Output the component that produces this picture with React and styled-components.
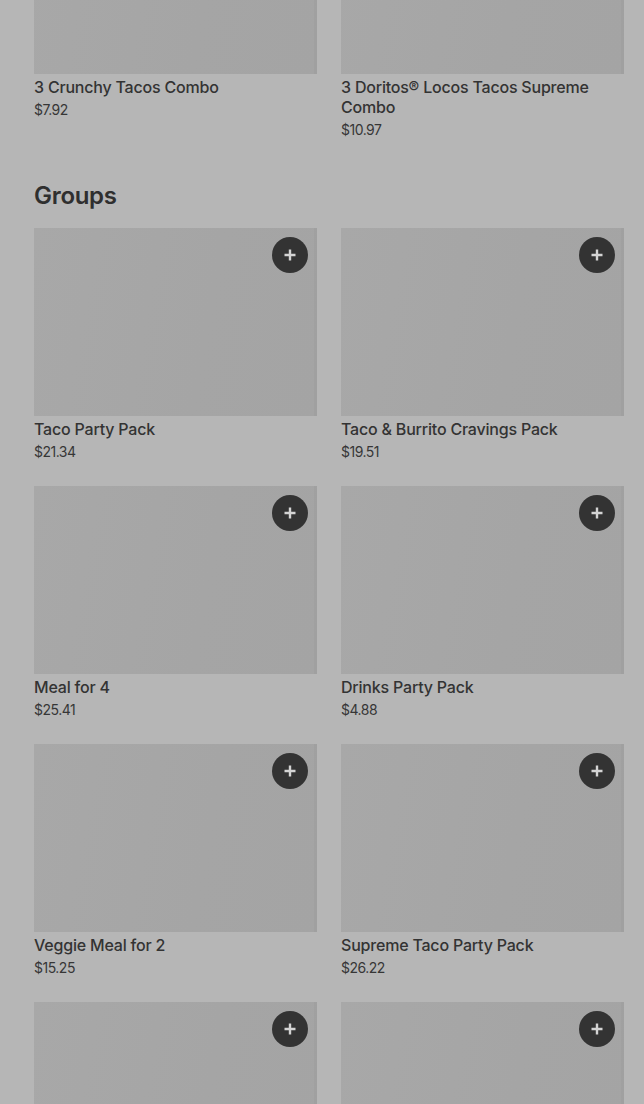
import React from "react";
import styled, { createGlobalStyle } from "styled-components";

const GlobalStyle = createGlobalStyle`
  html, body {
    margin: 0;
    padding: 0;
    background: #b6b6b6;
    overflow: hidden;
    height: 1104px;
  }
  body {
    font-family: Inter, "Noto Sans", Arial, sans-serif;
    color: #2f2f2f;
  }
`;

const Page = styled.main`
  margin-top: -114px;
  padding: 0 20px 0 34px;
  display: flex;
  flex-direction: column;
  height: 1218px;
  overflow: hidden;
`;

const Section = styled.section`
  display: flex;
  flex-direction: column;
`;

const Heading = styled.h2`
  margin: 40px 0 16px;
  font-size: 24px;
  line-height: 32px;
  font-weight: 600;
  letter-spacing: -0.3px;
  color: #2f2f2f;
`;

const Grid = styled.div`
  display: grid;
  grid-template-columns: repeat(2, 283px);
  column-gap: 24px;
  row-gap: 24px;
`;

const Card = styled.div`
  display: flex;
  flex-direction: column;
`;

const Thumb = styled.div`
  position: relative;
  height: 188px;
  background: linear-gradient(100deg, #a8a8a8 0%, #a5a5a5 60%, #a4a4a4 100%);
  box-shadow: inset -3px 0 0 rgba(0, 0, 0, 0.02);
`;

const AddButton = styled.button`
  position: absolute;
  top: 9px;
  right: 9px;
  width: 36px;
  height: 36px;
  border-radius: 50%;
  border: none;
  padding: 0;
  background: #333333;
  display: flex;
  align-items: center;
  justify-content: center;
  cursor: pointer;
`;

const Title = styled.div`
  margin-top: 3px;
  font-size: 16px;
  line-height: 20px;
  font-weight: 500;
  letter-spacing: -0.2px;
  color: #333333;
`;

const Price = styled.div`
  margin-top: 3px;
  font-size: 14px;
  line-height: 20px;
  font-weight: 400;
  letter-spacing: -0.5px;
  color: #363636;
`;

const PlusIcon = () => (
  <svg width="14" height="14" viewBox="0 0 14 14" aria-hidden="true">
    <path d="M7 1.5v11M1.5 7h11" stroke="#d4d4d4" strokeWidth="2.4" />
  </svg>
);

const Item = ({ name, price }) => (
  <Card>
    <Thumb>
      <AddButton aria-label={`Add ${name}`}>
        <PlusIcon />
      </AddButton>
    </Thumb>
    <Title>{name}</Title>
    <Price>{price}</Price>
  </Card>
);

const combos = [
  { name: "3 Crunchy Tacos Combo", price: "$7.92" },
  { name: "3 Doritos® Locos Tacos Supreme Combo", price: "$10.97" },
];

const groups = [
  { name: "Taco Party Pack", price: "$21.34" },
  { name: "Taco & Burrito Cravings Pack", price: "$19.51" },
  { name: "Meal for 4", price: "$25.41" },
  { name: "Drinks Party Pack", price: "$4.88" },
  { name: "Veggie Meal for 2", price: "$15.25" },
  { name: "Supreme Taco Party Pack", price: "$26.22" },
];

const moreGroups = [{ name: "Group Pack A" }, { name: "Group Pack B" }];

export default function App() {
  return (
    <>
      <GlobalStyle />
      <Page>
        <Section>
          <Grid>
            {combos.map((it) => (
              <Item key={it.name} {...it} />
            ))}
          </Grid>
        </Section>
        <Section>
          <Heading>Groups</Heading>
          <Grid>
            {groups.map((it) => (
              <Item key={it.name} {...it} />
            ))}
            {moreGroups.map((it) => (
              <Card key={it.name}>
                <Thumb>
                  <AddButton aria-label={`Add ${it.name}`}>
                    <PlusIcon />
                  </AddButton>
                </Thumb>
              </Card>
            ))}
          </Grid>
        </Section>
      </Page>
    </>
  );
}
